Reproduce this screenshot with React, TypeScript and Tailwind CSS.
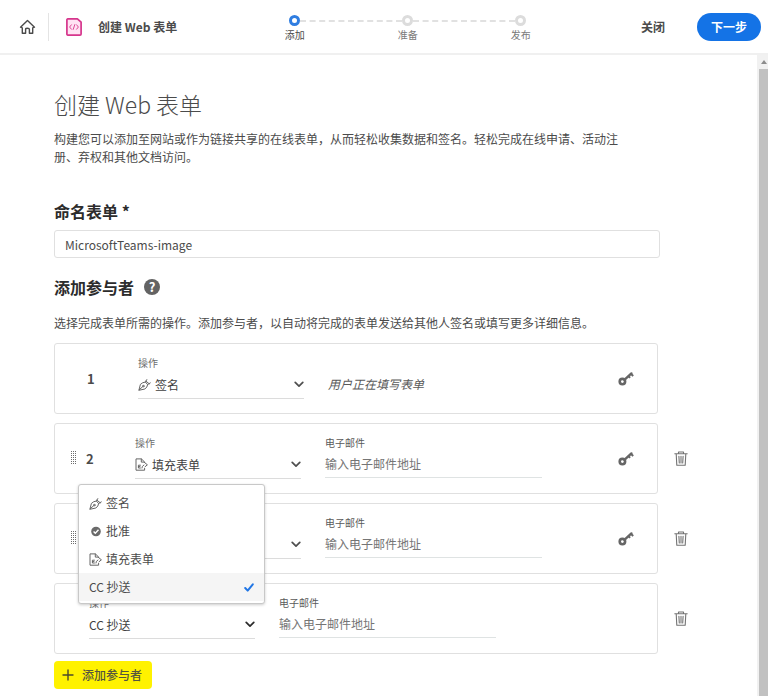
import type { ReactNode } from "react";

const ACTIONS = ["签名", "批准", "填充表单", "CC 抄送"];

function HomeIcon() {
  return (
    <svg width="17" height="16" viewBox="0 0 17 16" fill="none" stroke="#4b4b4b" strokeWidth="1.4" strokeLinejoin="round" strokeLinecap="round" aria-hidden="true">
      <path d="M1.5 8.2 L8.5 1.5 L15.5 8.2 L13.7 8.8 V14.3 H10.4 V10.2 Q10.4 9.2 8.5 9.2 Q6.6 9.2 6.6 10.2 V14.3 H3.3 V8.8 Z" />
    </svg>
  );
}

function WebFormIcon() {
  return (
    <svg width="16" height="18" viewBox="0 0 16 18" fill="none" strokeLinejoin="round" strokeLinecap="round" aria-hidden="true">
      <path d="M1.8 .9 H11.4 L15.1 4.2 V16 Q15.1 17.1 14 17.1 H1.8 Q.9 17.1 .9 16 V2 Q.9 .9 1.8 .9 Z" fill="#ffe3f3" stroke="#d6358c" strokeWidth="1.7" />
      <path d="M5.4 6.8 L3.6 9 L5.4 11.2 M10.6 6.8 L12.4 9 L10.6 11.2 M8.8 6.6 L7.2 11.4" stroke="#dc4a98" strokeWidth="1" />
    </svg>
  );
}

function PenIcon() {
  return (
    <svg className="shrink-0" width="13" height="13" viewBox="0 0 13 13" fill="none" stroke="#666666" strokeWidth="1" strokeLinejoin="round" strokeLinecap="round" aria-hidden="true">
      <path d="M1 11.9 L2.4 6.4 Q4.6 4.2 7.4 4 L9.6 6.6 Q9.4 9.2 7.2 10.8 Z" />
      <path d="M7.4 4 L8.8 1.6 M9.6 6.6 L12.3 4.9 M8 3.2 L11.2 5.8" />
      <path d="M1 11.9 L4.6 8.8" />
      <circle cx="5.3" cy="8.1" r=".8" />
    </svg>
  );
}

function ApproveIcon() {
  return (
    <svg className="shrink-0" width="13" height="13" viewBox="0 0 13 13" fill="none" aria-hidden="true">
      <circle cx="7" cy="6.5" r="4.8" fill="#6a6a6a" />
      <path d="M4.6 6.6 L6.3 8.3 L9.5 4.8" stroke="#fff" strokeWidth="1.4" />
    </svg>
  );
}

function FillIcon() {
  return (
    <svg className="shrink-0" width="13" height="13" viewBox="0 0 13 13" fill="none" stroke="#666666" strokeWidth="1" strokeLinejoin="round" strokeLinecap="round" aria-hidden="true">
      <path d="M9.6 10.4 V12.2 H1 V.9 H6.4 L9.6 4 V4.6" />
      <path d="M6.3 1.1 V4.1 H9.4" />
      <path d="M5.4 7.2 H3.4 V10 H5.4 M3.4 8.6 H5" />
      <path d="M7 10 L7.4 8.4 L9 7 M10 4.9 L12.4 6.8 L10 8.8" />
    </svg>
  );
}

function Chevron({ dark }: { dark?: boolean }) {
  return (
    <svg className="pointer-events-none shrink-0" width="10" height="7" viewBox="0 0 10 7" fill="none" stroke={dark ? "#2c2c2c" : "#4f4f4f"} strokeWidth="1.7" strokeLinecap="round" strokeLinejoin="round" aria-hidden="true">
      <path d="M1.2 1.3 L5 5.2 L8.8 1.3" />
    </svg>
  );
}

function KeyIcon() {
  return (
    <svg width="16" height="16" viewBox="0 0 16 16" fill="none" aria-hidden="true">
      <circle cx="4.4" cy="10.6" r="2.7" stroke="#666666" strokeWidth="2.6" />
      <path d="M6.4 8.8 L13.4 2.4" stroke="#666666" strokeWidth="2.4" strokeLinecap="round" />
      <path d="M10.4 4.8 L12 6.8 M12.8 2.8 L15.2 5" stroke="#666666" strokeWidth="2" />
    </svg>
  );
}

function TrashIcon() {
  return (
    <svg width="14" height="16" viewBox="0 0 14 16" fill="none" stroke="#737373" strokeWidth="1.1" strokeLinejoin="round" strokeLinecap="round" aria-hidden="true">
      <path d="M.8 2.8 H13.2 M4.5 2.6 V1 H9.5 V2.6 M2.2 2.8 L2.8 14.2 H11.2 L11.8 2.8" />
      <path d="M4.9 5.2 L5.3 12 M7 5.2 V12 M9.1 5.2 L8.7 12" />
    </svg>
  );
}

function Grip() {
  const rows = [0, 1, 2, 3, 4, 5, 6];
  return (
    <svg width="6" height="15" viewBox="0 0 6 15" fill="#6b6b6b" aria-hidden="true">
      {rows.map((r) => (
        <g key={r}>
          <rect x="0" y={r * 2} width="1" height="1" />
          <rect x="2" y={r * 2} width="1" height="1" />
          <rect x="4" y={r * 2} width="1" height="1" />
        </g>
      ))}
    </svg>
  );
}

function Step({ label, last, active }: { label: string; last?: boolean; active?: boolean }) {
  return (
    <li className="flex flex-col items-center gap-[2px]">
      <span className="flex w-full items-center">
        <span className="flex-1" />
        <span className={active ? "size-[11px] rounded-full border-3 border-[#2f7de1]" : "size-[11px] rounded-full border-3 border-[#dcdcdc]"} />
        <span className="flex-1">{!last && <span className="block w-[200%] border-t-2 border-dashed border-[#e1e1e1]" />}</span>
      </span>
      <span className={active ? "text-[10px] leading-[14px] text-[#4b4b4b]" : "text-[10px] leading-[14px] text-[#7a7a7a]"}>{label}</span>
    </li>
  );
}

function ActionField({ id, value, icon, dark, children }: { id: string; value: string; icon?: ReactNode; dark?: boolean; children?: ReactNode }) {
  return (
    <div className="relative mb-[3px] flex w-[166px] shrink-0 flex-col">
      <label htmlFor={id} className="text-[10px] leading-4 text-[#6e6e6e]">操作</label>
      <div className="flex h-7 items-center gap-1 border-b border-[#dcdcdc]">
        {icon}
        <select id={id} defaultValue={value} className="h-6 min-w-0 flex-1 appearance-none bg-transparent text-xs text-[#3f3f3f] outline-none">
          {ACTIONS.map((a) => (
            <option key={a}>{a}</option>
          ))}
        </select>
        <Chevron dark={dark} />
      </div>
      {children}
    </div>
  );
}

function EmailField({ id }: { id: string }) {
  return (
    <div className="mb-1 flex w-[217px] min-w-0 flex-col">
      <label htmlFor={id} className="text-[10px] leading-4 text-[#5a5a5a]">电子邮件</label>
      <input id={id} type="email" placeholder="输入电子邮件地址" className="h-[27px] border-b border-[#dfe3e3] bg-transparent pb-[2px] text-xs outline-none placeholder:text-[#757575]" />
    </div>
  );
}

function Row({ children, removable }: { children: ReactNode; removable?: boolean }) {
  return (
    <li className="flex items-center gap-4">
      <div className="flex h-[71px] min-w-0 flex-1 items-center rounded-[3px] border border-[#e0e0e0]">{children}</div>
      <div className="flex w-[14px] shrink-0">
        {removable && (
          <button type="button" aria-label="删除">
            <TrashIcon />
          </button>
        )}
      </div>
    </li>
  );
}

function KeyButton() {
  return (
    <button type="button" aria-label="身份验证" className="mr-[23px] ml-auto shrink-0">
      <KeyIcon />
    </button>
  );
}

function MenuItem({ icon, label, selected }: { icon?: ReactNode; label: string; selected?: boolean }) {
  return (
    <li role="option" aria-selected={!!selected} className={selected ? "flex h-7 items-center gap-1 bg-[#f5f5f5] px-[10px]" : "flex h-7 items-center gap-1 px-[10px]"}>
      {icon}
      <span className="text-xs text-[#4b4b4b]">{label}</span>
      {selected && (
        <svg className="ml-auto" width="10" height="9" viewBox="0 0 10 9" fill="none" stroke="#2176e5" strokeWidth="2" strokeLinecap="round" strokeLinejoin="round" aria-hidden="true">
          <path d="M1.2 5 L3.7 7.6 L8.8 1.3" />
        </svg>
      )}
    </li>
  );
}

export default function App() {
  return (
    <div className="flex min-h-screen flex-col bg-white font-['Noto_Sans_CJK_SC',sans-serif] text-xs text-[#4b4b4b]">
      <header className="flex h-[55px] items-center border-b-2 border-[#f0f0f0] pr-[7px] pl-[19px]">
        <a href="#home" aria-label="主页">
          <HomeIcon />
        </a>
        <div className="ml-3 h-7 w-px bg-[#e4e4e4]" />
        <div className="ml-[17px] flex items-center gap-4">
          <WebFormIcon />
          <span className="font-bold whitespace-nowrap">创建 Web 表单</span>
        </div>
        <ol className="ml-[61px] grid w-[339px] grid-cols-3 pt-1">
          <Step label="添加" active />
          <Step label="准备" />
          <Step label="发布" last />
        </ol>
        <div className="ml-auto flex items-center gap-8">
          <button type="button" className="font-bold whitespace-nowrap">关闭</button>
          <button type="button" className="h-7 w-16 rounded-full bg-[#1473e6] font-bold whitespace-nowrap text-white">下一步</button>
        </div>
      </header>

      <div className="flex flex-1">
        <main className="min-w-0 flex-1 pt-[34px] pr-[69px] pb-[6px] pl-[54px]">
          <div className="pr-7">
            <h1 className="text-[23px] leading-[30px] font-light">创建 Web 表单</h1>
            <p className="mt-[11px] max-w-[576px] leading-[18px]">
              构建您可以添加至网站或作为链接共享的在线表单，从而轻松收集数据和签名。轻松完成在线申请、活动注册、弃权和其他文档访问。
            </p>
            <label htmlFor="form-name" className="mt-[35px] block text-base leading-5 font-bold text-[#2c2c2c]">命名表单 *</label>
            <input id="form-name" type="text" defaultValue="MicrosoftTeams-image" className="mt-[9px] block h-7 w-full rounded-[3px] border border-[#e0e0e0] px-[10px] text-xs text-[#4b4b4b] outline-none" />
            <div className="mt-[19px] flex items-center gap-[10px]">
              <h2 className="text-base leading-5 font-bold text-[#2c2c2c]">添加参与者</h2>
              <button type="button" aria-label="帮助" className="flex size-4 items-center justify-center rounded-full bg-[#636363] text-[13px] leading-4 font-bold text-white">?</button>
            </div>
            <p className="mt-[17px] leading-[18px]">选择完成表单所需的操作。添加参与者，以自动将完成的表单发送给其他人签名或填写更多详细信息。</p>
          </div>

          <ol className="mt-[11px] flex flex-col gap-[9px]">
            <Row>
              <span className="ml-8 w-[51px] shrink-0 text-[13px] font-bold">1</span>
              <ActionField id="action-1" value="签名" icon={<PenIcon />} />
              <em className="mt-[10px] ml-6 whitespace-nowrap text-[#5a5a5a]">用户正在填写表单</em>
              <KeyButton />
            </Row>
            <Row removable>
              <span className="ml-4 w-[15px] shrink-0"><Grip /></span>
              <span className="w-[49px] shrink-0 text-[13px] font-bold">2</span>
              <ActionField id="action-2" value="填充表单" icon={<FillIcon />} />
              <span className="w-6 shrink-0" />
              <EmailField id="email-2" />
              <KeyButton />
            </Row>
            <Row removable>
              <span className="ml-4 w-[15px] shrink-0"><Grip /></span>
              <span className="w-[49px] shrink-0 text-[13px] font-bold">3</span>
              <ActionField id="action-3" value="填充表单" icon={<FillIcon />} />
              <span className="w-6 shrink-0" />
              <EmailField id="email-3" />
              <KeyButton />
            </Row>
            <Row removable>
              <span className="w-[34px] shrink-0" />
              <ActionField id="action-4" value="CC 抄送" dark>
                <ul role="listbox" aria-label="操作" className="absolute bottom-[35px] -left-[11px] z-10 w-[187px] rounded-[3px] border border-[#c8c8c8] bg-white pt-1 pb-[2px] shadow-[0_1px_3px_rgba(0,0,0,0.2)]">
                  <MenuItem icon={<PenIcon />} label="签名" />
                  <MenuItem icon={<ApproveIcon />} label="批准" />
                  <MenuItem icon={<FillIcon />} label="填充表单" />
                  <MenuItem label="CC 抄送" selected />
                </ul>
              </ActionField>
              <span className="w-6 shrink-0" />
              <EmailField id="email-4" />
            </Row>
          </ol>

          <button type="button" className="mt-[7px] flex h-7 items-center gap-2 rounded-[4px] bg-[#fff200] pr-[10px] pl-2 font-medium text-[#55553f]">
            <svg width="12" height="12" viewBox="0 0 12 12" stroke="#4b4b2b" strokeWidth="1.4" strokeLinecap="round" aria-hidden="true">
              <path d="M6 1 V11 M1 6 H11" />
            </svg>
            添加参与者
          </button>
        </main>
        <div className="flex w-[11px] shrink-0 flex-col bg-[#f1f1f1]" aria-hidden="true">
          <div className="flex h-[14px] items-center justify-end pr-[1px]">
            <svg width="6" height="4" viewBox="0 0 6 4" fill="#8c8c8c">
              <path d="M0 4 L3 0 L6 4 Z" />
            </svg>
          </div>
          <div className="ml-[2px] flex-1 bg-[#c1c1c1]" />
        </div>
      </div>
    </div>
  );
}
